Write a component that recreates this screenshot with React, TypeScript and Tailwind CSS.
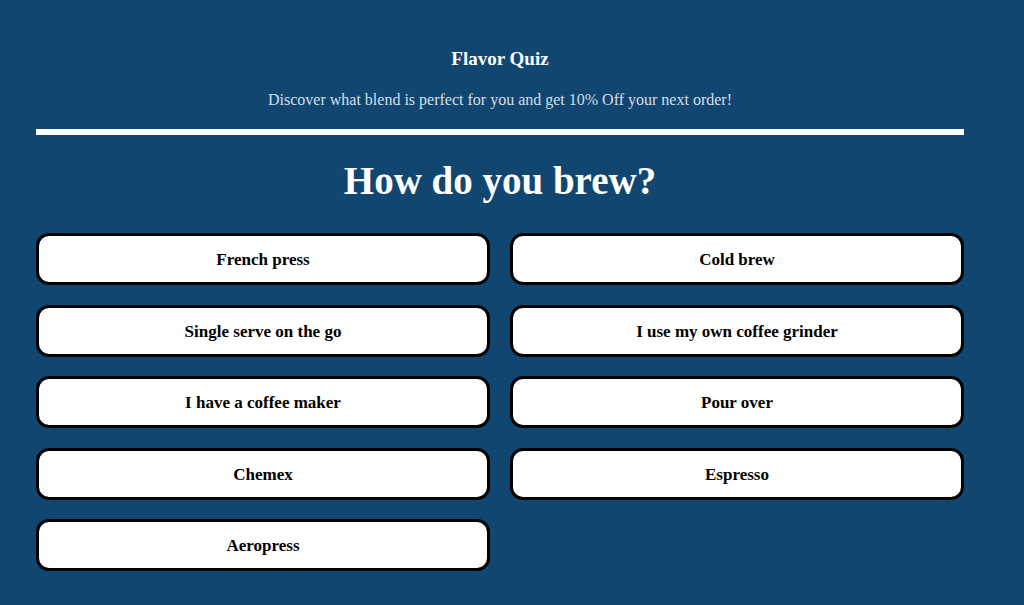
import React from "react";

const options = [
  "French press",
  "Cold brew",
  "Single serve on the go",
  "I use my own coffee grinder",
  "I have a coffee maker",
  "Pour over",
  "Chemex",
  "Espresso",
  "Aeropress",
];

export default function App() {
  return (
    <div
      className="w-[1024px] h-[605px] bg-[#10466f] overflow-hidden"
      style={{ fontFamily: '"Liberation Serif", "DejaVu Serif", serif' }}
    >
      <div className="ml-[36px] w-[928px] flex flex-col">
        <h1 className="mt-[46px] text-center text-white font-bold text-[19px] leading-[26px]">
          Flavor Quiz
        </h1>
        <p className="mt-[18px] text-center text-[#d5dfea] text-[16px] leading-[20px]">
          Discover what blend is perfect for you and get 10% Off your next order!
        </p>
        <div className="mt-[19px] h-[6px] bg-white" />
        <h2 className="mt-[22px] text-center text-white font-bold text-[39px] leading-[48px]">
          How do you brew?
        </h2>
        <div className="mt-[28px] grid grid-cols-2 gap-x-[20px] gap-y-[19.5px]">
          {options.map((o) => (
            <button
              key={o}
              className="h-[52px] pt-[2px] bg-white border-[3px] border-black rounded-[13px] text-black font-bold text-[17px] flex items-center justify-center"
            >
              {o}
            </button>
          ))}
        </div>
      </div>
    </div>
  );
}
